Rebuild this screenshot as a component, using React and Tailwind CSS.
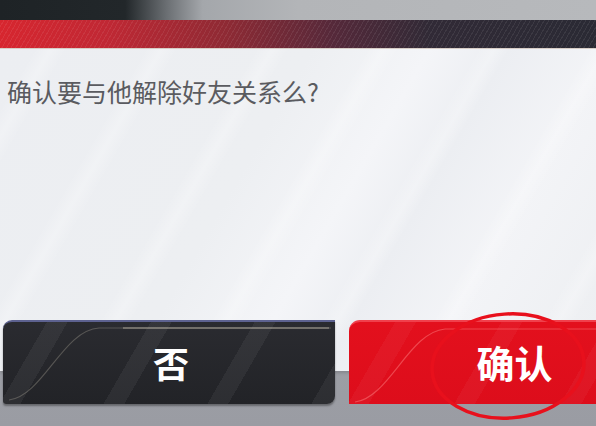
const ConfirmDialog = () => {
  return (
    <div className="relative w-[596px] h-[426px] overflow-hidden bg-[linear-gradient(180deg,#a9abb0_0%,#9a9ca3_100%)] font-['Noto_Sans_CJK_SC','Noto_Sans',sans-serif]">
      {/* top strip */}
      <div className="h-[20px] bg-[linear-gradient(90deg,#1e2326_0%,#22272a_21%,#6b6f73_28%,#a4a7ab_34%,#b3b5b8_50%,#b7b9bc_100%)]" />

      {/* header bar */}
      <div className="h-[28px] bg-[repeating-linear-gradient(120deg,transparent_0_3px,rgba(255,255,255,0.07)_3px_4px),linear-gradient(90deg,#d7262f_0%,#c02834_18%,#8e2a34_38%,#55293a_56%,#312a36_72%,#2a2a34_100%)]" />
      <div className="h-px bg-[#d9cfc8]" />

      {/* panel body */}
      <div className="relative h-[322px] overflow-hidden bg-[linear-gradient(120deg,#eceef2_0%,#edeff2_40%,#f4f5f8_55%,#eceef2_65%,#f3f4f7_78%,#eceef1_100%)] shadow-[0_2px_3px_rgba(0,0,0,0.15)]">
        <div className="absolute inset-0 bg-[repeating-linear-gradient(120deg,transparent_0_30px,rgba(255,255,255,0.5)_44px,transparent_58px_96px)] opacity-50" />
        <p className="relative pt-[27px] pl-[7px] text-[25px] leading-[30px] text-[#5a5b60]">
          确认要与他解除好友关系么?
        </p>
      </div>

      {/* buttons */}
      <div className="relative -mt-[51px] flex h-[84px] items-stretch">
        <button className="relative ml-[3px] w-[332px] overflow-hidden rounded-tl-[9px] rounded-br-[8px] rounded-bl-[3px] border-t-2 border-[#5d6290] bg-[repeating-linear-gradient(120deg,transparent_0_38px,rgba(255,255,255,0.05)_38px_56px,transparent_56px_90px),linear-gradient(180deg,#2a2b30_0%,#222327_100%)] shadow-[0_2px_2px_rgba(0,0,0,0.35)]">
          <svg className="absolute inset-0" width="332" height="82" viewBox="0 0 332 82">
            <path d="M6 78 C 40 74, 60 8, 96 6 L 328 6" fill="none" stroke="#b0a89c" strokeOpacity="0.35" strokeWidth="1.2" />
            <path d="M120 6 L 326 6" fill="none" stroke="#c8bfb0" strokeOpacity="0.5" strokeWidth="1.4" />
          </svg>
          <span className="relative pl-[4px] text-[36px] font-bold leading-none text-white">否</span>
        </button>

        <button className="relative ml-[14px] flex-1 overflow-hidden rounded-tl-[11px] border-t-2 border-[#f0404c] bg-[repeating-linear-gradient(120deg,transparent_0_40px,rgba(255,255,255,0.04)_40px_58px,transparent_58px_92px),linear-gradient(180deg,#e3101d_0%,#dd0d1b_100%)]">
          <svg className="absolute inset-0" width="247" height="82" viewBox="0 0 247 82">
            <path d="M6 80 C 40 76, 60 10, 96 7 L 247 7" fill="none" stroke="#ff8a8a" strokeOpacity="0.45" strokeWidth="1.2" />
          </svg>
          <span className="relative pl-[84px] text-[38px] font-bold leading-none text-white">确认</span>
        </button>
      </div>

      {/* hand-drawn circle */}
      <svg className="absolute left-[426px] top-[310px]" width="164" height="114" viewBox="0 0 164 114">
        <ellipse cx="82" cy="56" rx="76" ry="52" transform="rotate(-4 82 56)" fill="none" stroke="#e8101c" strokeWidth="3.5" />
      </svg>
    </div>
  );
};

export default function App() {
  return <ConfirmDialog />;
}
